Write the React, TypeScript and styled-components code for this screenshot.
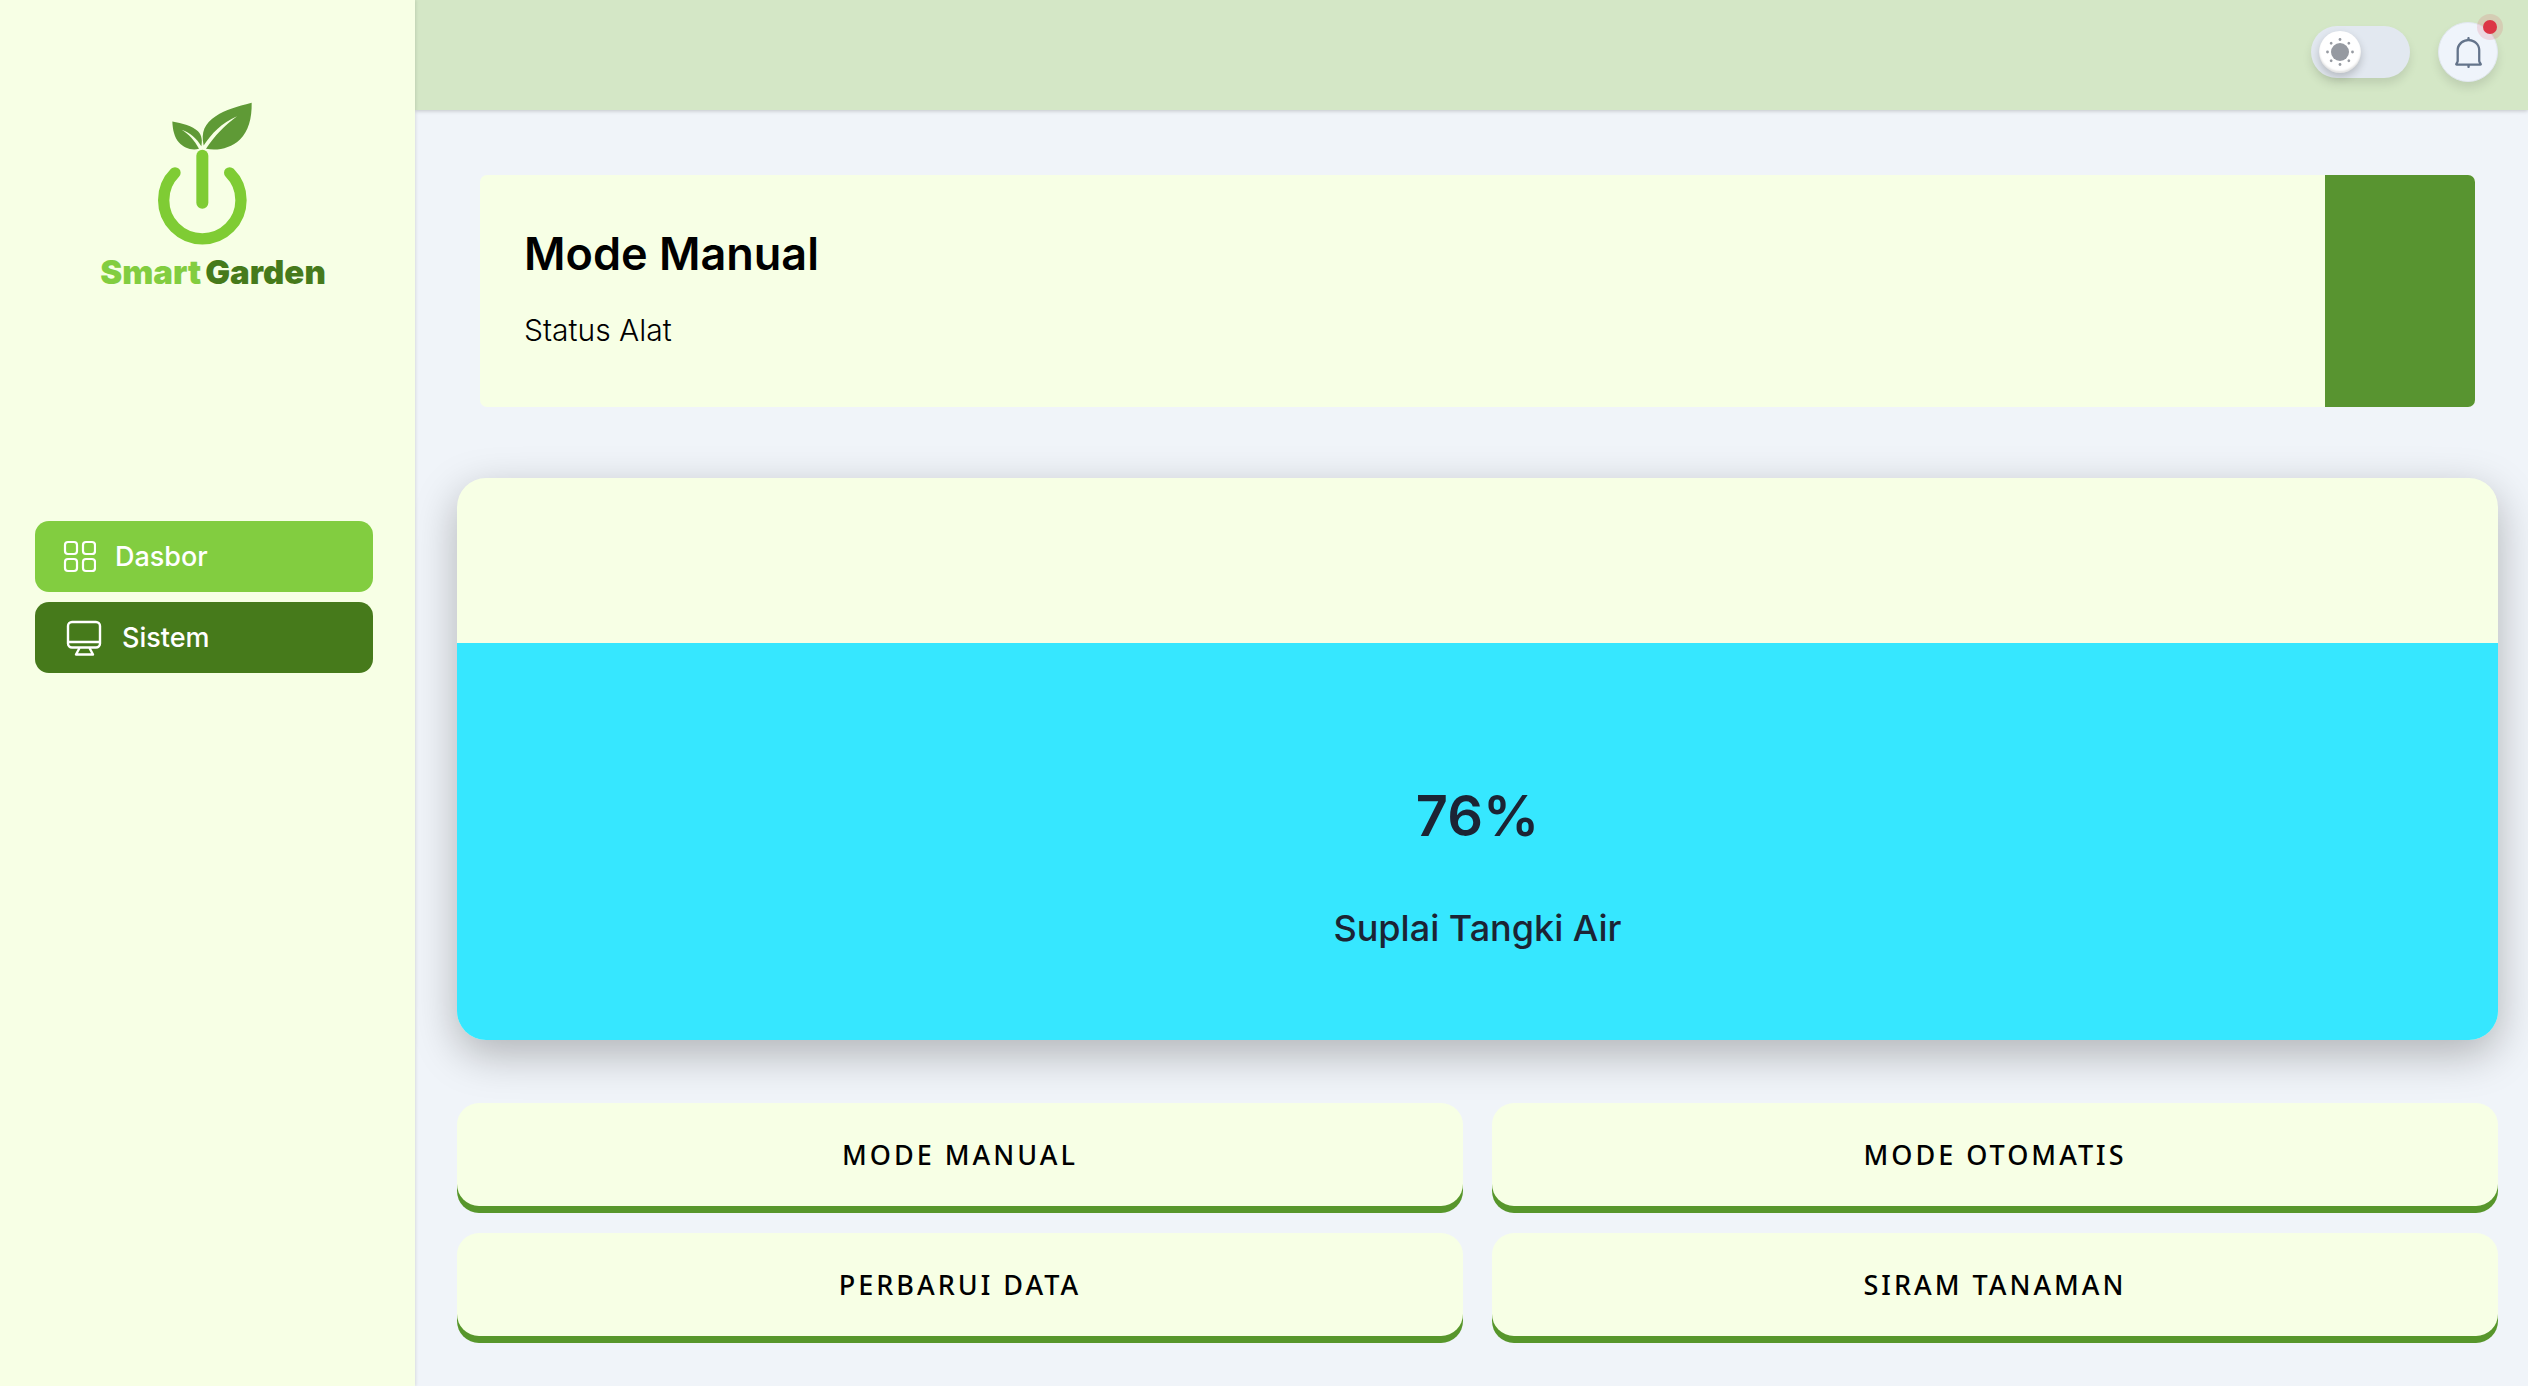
import React, { useState } from "react";
import styled, { createGlobalStyle } from "styled-components";

const color = {
  cream: "#f7ffe5",
  page: "#f0f4f9",
  header: "#d4e7c6",
  lime: "#82cd40",
  leaf: "#589430",
  forest: "#467a1b",
  water: "#36e7ff",
  ink: "#1c2434",
};

const GlobalStyle = createGlobalStyle`
  *, *::before, *::after { box-sizing: border-box; }
  body {
    margin: 0;
    background: ${color.page};
    color: ${color.ink};
    font-family: Inter, "Liberation Sans", sans-serif;
  }
  h1, h2, p { margin: 0; }
`;

const Shell = styled.div`
  display: grid;
  grid-template-columns: 415px minmax(0, 1fr);
  min-height: 100vh;
`;

const Sidebar = styled.aside`
  position: relative;
  z-index: 1;
  background: ${color.cream};
  padding: 102px 42px 42px 35px;
  box-shadow: 1px 0 3px rgba(0, 0, 0, 0.1);
`;

const Brand = styled.a`
  display: flex;
  flex-direction: column;
  align-items: center;
  gap: 9px;
  height: 419px;
  padding-left: 18px;
  text-decoration: none;
`;

const BrandName = styled.span`
  display: flex;
  gap: 4px;
  font-size: 33px;
  line-height: 36px;
  font-weight: 900;
  color: ${color.lime};
`;

const BrandAccent = styled.span`
  color: ${color.forest};
`;

const Nav = styled.nav`
  display: flex;
  flex-direction: column;
  gap: 10px;
`;

const NavLink = styled.a<{ $active?: boolean }>`
  display: flex;
  align-items: center;
  gap: 19px;
  height: 71px;
  padding: 0 28px;
  border-radius: 14px;
  background: ${(p) => (p.$active ? color.lime : color.forest)};
  color: #fff;
  font-size: 27px;
  font-weight: 500;
  text-decoration: none;
`;

const Page = styled.div`
  display: flex;
  flex-direction: column;
`;

const Header = styled.header`
  display: flex;
  align-items: center;
  justify-content: flex-end;
  gap: 28px;
  height: 110px;
  padding: 0 30px 6px;
  background: ${color.header};
  box-shadow: 0 1px 4px rgba(0, 0, 0, 0.2);
`;

const Switch = styled.label`
  display: flex;
  align-items: center;
  width: 99px;
  height: 52px;
  padding: 0 8px;
  border-radius: 26px;
  background: #e2e8f0;
  box-shadow: 0 6px 10px rgba(0, 0, 0, 0.1);
  cursor: pointer;
`;

const SwitchInput = styled.input`
  position: absolute;
  opacity: 0;
  margin: 0;
`;

const Knob = styled.span<{ $on: boolean }>`
  display: grid;
  place-items: center;
  width: 42px;
  height: 42px;
  margin-left: ${(p) => (p.$on ? "auto" : "0")};
  border-radius: 50%;
  background: #fff;
  box-shadow: 0 4px 8px rgba(0, 0, 0, 0.2), inset 0 -2px 2px rgba(0, 0, 0, 0.12);
`;

const BellButton = styled.button`
  position: relative;
  display: grid;
  place-items: center;
  width: 60px;
  height: 60px;
  padding: 0;
  border: 1px solid #e2e8f0;
  border-radius: 50%;
  background: #eff4fb;
  color: #64748b;
  box-shadow: 0 6px 10px rgba(0, 0, 0, 0.1);
`;

const Alert = styled.span`
  position: absolute;
  top: -3px;
  right: 0;
  width: 14px;
  height: 14px;
  border-radius: 50%;
  background: #dc3545;
  box-shadow: 0 0 0 6px rgba(220, 53, 69, 0.14);
`;

const Content = styled.main`
  display: flex;
  flex-direction: column;
  padding: 65px 30px 42px 42px;
`;

const StatusCard = styled.section`
  display: flex;
  margin: 0 23px 71px;
  height: 232px;
  border-radius: 7px;
  overflow: hidden;
  background: ${color.cream};
  color: #000;
`;

const StatusText = styled.div`
  flex: 1;
  padding: 51px 44px;
`;

const StatusTitle = styled.h1`
  font-size: 45px;
  line-height: 56px;
  font-weight: 600;
`;

const StatusLabel = styled.p`
  margin-top: 26px;
  font-size: 30px;
  line-height: 44px;
  font-weight: 300;
`;

const StatusLight = styled.div`
  width: 150px;
  background: ${color.leaf};
`;

const Tank = styled.section`
  display: flex;
  flex-direction: column;
  height: 562px;
  margin-bottom: 63px;
  padding-top: 165px;
  border-radius: 29px;
  overflow: hidden;
  background: ${color.cream};
  box-shadow: 0 14px 44px rgba(0, 0, 0, 0.27);
`;

const Water = styled.div`
  display: flex;
  flex: 1;
  flex-direction: column;
  align-items: center;
  gap: 53px;
  padding-top: 138px;
  background: ${color.water};
`;

const Level = styled.p`
  font-size: 56px;
  line-height: 70px;
  font-weight: 600;
`;

const TankLabel = styled.h2`
  font-size: 36px;
  line-height: 48px;
  font-weight: 500;
`;

const Actions = styled.div`
  display: grid;
  grid-template-columns: repeat(2, minmax(0, 1fr));
  gap: 27px 29px;
  position: relative;
`;

const Action = styled.button`
  height: 103px;
  padding: 0 20px;
  border: 0;
  border-radius: 22px;
  background: ${color.cream};
  box-shadow: 0 7px 0 #57962b;
  color: #000;
  font-family: "Noto Sans", "Open Sans", sans-serif;
  font-size: 27px;
  font-weight: 500;
  letter-spacing: 3px;
  text-transform: uppercase;
`;

const Logo = () => (
  <svg width="224" height="143" viewBox="63 66 672 428" fill="none" aria-hidden="true">
    <path d="M285 278A116 116 0 1 0 449 278" stroke="#7fcc34" strokeWidth="34" strokeLinecap="round" />
    <path d="M367 227V368" stroke="#7fcc34" strokeWidth="36" strokeLinecap="round" />
    <path
      d="M515 68C470 80 438 88 407 108C374 130 362 155 371 196C394 160 425 128 471 108C435 135 404 166 378 206C414 213 452 204 480 178C505 154 516 116 515 68Z"
      fill="#5f9a36"
    />
    <path
      d="M277 124C306 129 338 138 354 153C367 166 367 184 364 198C350 176 331 158 305 149C327 163 343 180 357 206C333 212 311 202 297 187C283 171 278 149 277 124Z"
      fill="#5f9a36"
    />
  </svg>
);

const GridIcon = () => (
  <svg width="33" height="33" viewBox="0 0 33 33" fill="none" stroke="#fff" strokeWidth="2.2" aria-hidden="true">
    <rect x="2" y="2" width="12" height="12" rx="3" />
    <rect x="20" y="2" width="12" height="12" rx="3" />
    <rect x="2" y="19" width="12" height="12" rx="3" />
    <rect x="20" y="19" width="12" height="12" rx="3" />
  </svg>
);

const MonitorIcon = () => (
  <svg width="40" height="36" viewBox="0 0 40 36" fill="none" stroke="#fff" strokeWidth="2.4" strokeLinejoin="round" aria-hidden="true">
    <rect x="5" y="2" width="32" height="25.5" rx="4" />
    <path d="M5 22H37M16.500 28L13 34.500H30L26.500 28" />
  </svg>
);

const SunIcon = () => (
  <svg width="28" height="28" viewBox="-14 -14 28 28" fill="#969aa1" aria-hidden="true">
    <circle r="9" />
    {[0, 45, 90, 135, 180, 225, 270, 315].map((a) => (
      <circle key={a} cx="12.5" r="1.4" transform={`rotate(${a})`} />
    ))}
  </svg>
);

const BellIcon = () => (
  <svg width="33" height="33" viewBox="0 0 18 18" fill="currentColor" aria-hidden="true">
    <path d="M16.1999 14.9343L15.6374 14.0624C15.5249 13.8937 15.4687 13.7249 15.4687 13.528V7.67803C15.4687 6.01865 14.7655 4.47178 13.4718 3.31865C12.4312 2.39053 11.0812 1.7999 9.64678 1.6874V1.1249C9.64678 0.787402 9.36553 0.478027 8.9999 0.478027C8.6624 0.478027 8.35303 0.759277 8.35303 1.1249V1.65928C8.29678 1.65928 8.24053 1.65928 8.18428 1.6874C4.92178 2.05303 2.4749 4.66865 2.4749 7.79053V13.528C2.44678 13.8093 2.39053 13.9499 2.33428 14.0343L1.7999 14.9343C1.63115 15.2155 1.63115 15.553 1.7999 15.8343C1.96865 16.0874 2.2499 16.2562 2.55928 16.2562H8.38115V16.8749C8.38115 17.2124 8.6624 17.5218 9.02803 17.5218C9.36553 17.5218 9.6749 17.2405 9.6749 16.8749V16.2562H15.4687C15.778 16.2562 16.0593 16.0874 16.228 15.8343C16.3968 15.553 16.3968 15.2155 16.1999 14.9343ZM3.23428 14.9905L3.43115 14.653C3.5999 14.3718 3.68428 14.0343 3.74053 13.6405V7.79053C3.74053 5.31553 5.70928 3.23428 8.3249 2.95303C9.92803 2.78428 11.503 3.2624 12.6562 4.2749C13.6687 5.1749 14.2312 6.38428 14.2312 7.67803V13.528C14.2312 13.9499 14.3437 14.3437 14.5968 14.7374L14.7655 14.9905H3.23428Z" />
  </svg>
);

const actions = ["Mode Manual", "Mode Otomatis", "Perbarui Data", "Siram Tanaman"];

export default function App() {
  const [dark, setDark] = useState(false);

  return (
    <>
      <GlobalStyle />
      <Shell>
        <Sidebar>
          <Brand href="#">
            <Logo />
            <BrandName>
              Smart<BrandAccent>Garden</BrandAccent>
            </BrandName>
          </Brand>
          <Nav>
            <NavLink href="#dasbor" $active>
              <GridIcon />
              Dasbor
            </NavLink>
            <NavLink href="#sistem">
              <MonitorIcon />
              Sistem
            </NavLink>
          </Nav>
        </Sidebar>
        <Page>
          <Header>
            <Switch>
              <SwitchInput
                type="checkbox"
                aria-label="Mode gelap"
                checked={dark}
                onChange={(e) => setDark(e.target.checked)}
              />
              <Knob $on={dark}>
                <SunIcon />
              </Knob>
            </Switch>
            <BellButton type="button" aria-label="Notifikasi">
              <BellIcon />
              <Alert />
            </BellButton>
          </Header>
          <Content>
            <StatusCard>
              <StatusText>
                <StatusTitle>Mode Manual</StatusTitle>
                <StatusLabel>Status Alat</StatusLabel>
              </StatusText>
              <StatusLight />
            </StatusCard>
            <Tank>
              <Water>
                <Level>76%</Level>
                <TankLabel>Suplai Tangki Air</TankLabel>
              </Water>
            </Tank>
            <Actions>
              {actions.map((name) => (
                <Action key={name} type="button">
                  {name}
                </Action>
              ))}
            </Actions>
          </Content>
        </Page>
      </Shell>
    </>
  );
}
